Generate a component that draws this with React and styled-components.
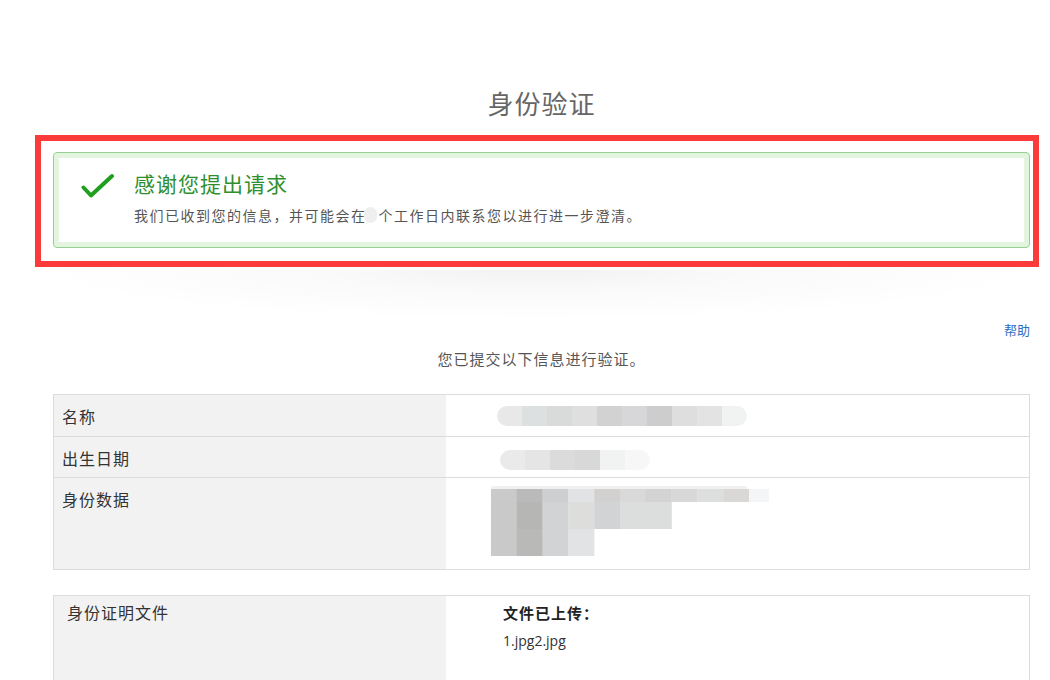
import styled, { createGlobalStyle } from "styled-components";

const GlobalStyle = createGlobalStyle`
  body {
    margin: 0;
    background: #fff;
    font-family: "Noto Sans CJK SC", "Noto Sans", sans-serif;
  }
`;

const Page = styled.div`
  width: 977px;
  margin-left: 53px;
  padding-top: 85px;
`;

const Title = styled.h1`
  margin: 0 0 14px;
  font-size: 26px;
  font-weight: 400;
  line-height: 36px;
  letter-spacing: 1px;
  color: #666;
  text-align: center;
`;

// red annotation frame around the alert
const Highlight = styled.div`
  margin: 0 -9px 0 -18px;
  border: 6px solid #fb3a3a;
  padding: 11px 3px 13px 12px;
`;

const Alert = styled.div`
  display: flex;
  align-items: flex-start;
  height: 96px;
  box-sizing: border-box;
  padding: 18px 0 0 26px;
  border: 1px solid #93cf93;
  border-radius: 4px;
  box-shadow: inset 0 0 0 5px #e3f4df;
  background: #fff;
`;

const CheckIcon = styled.svg`
  flex: none;
  width: 34px;
  height: 28px;
  margin-top: 1px;
`;

const AlertBody = styled.div`
  margin-left: 20px;
`;

const AlertTitle = styled.div`
  font-size: 21px;
  line-height: 24px;
  letter-spacing: 1px;
  color: #2f8f2f;
`;

const AlertText = styled.div`
  margin-top: 10px;
  font-size: 14px;
  line-height: 20px;
  letter-spacing: 1.5px;
  color: #555;
  display: flex;
  align-items: center;
`;

const Redacted = styled.span`
  display: inline-block;
  width: 13px;
  height: 16px;
  margin: 0 2px 0 -3px;
  border-radius: 8px;
  background: #efefef;
`;

const Shade = styled.div`
  height: 50px;
  margin: 3px 10px 0 0;
  background: radial-gradient(
    ellipse 52% 100% at 50% 0%,
    rgba(0, 0, 0, 0.05),
    rgba(0, 0, 0, 0.018) 45%,
    rgba(0, 0, 0, 0) 100%
  );
`;

const HelpRow = styled.div`
  text-align: right;
  line-height: 16px;
`;

const HelpLink = styled.a`
  font-size: 13px;
  color: #2f6fc4;
  text-decoration: none;
`;

const Intro = styled.p`
  margin: 11px 0 25px;
  font-size: 15px;
  line-height: 20px;
  letter-spacing: 1px;
  color: #555;
  text-align: center;
`;

const InfoTable = styled.div`
  border: 1px solid #dcdcdc;
  margin-bottom: ${(p) => p.$gap || 0}px;
`;

const Row = styled.div`
  display: grid;
  grid-template-columns: 392px 1fr;
  box-sizing: border-box;
  height: ${(p) => p.$h}px;
  & + & {
    border-top: 1px solid #dcdcdc;
  }
`;

const Label = styled.div`
  background: #f2f2f2;
  padding: ${(p) => p.$top || 11}px 9px 0 ${(p) => p.$left || 8}px;
  font-size: 16px;
  line-height: 20px;
  letter-spacing: 1px;
  color: #333;
`;

const Value = styled.div`
  background: #fff;
  padding: ${(p) => p.$top || 0}px 0 0 ${(p) => p.$left || 0}px;
`;

const FileHead = styled.div`
  font-size: 15px;
  font-weight: 700;
  line-height: 20px;
  letter-spacing: 1px;
  color: #222;
`;

const FileName = styled.div`
  margin-top: 8px;
  font-family: "Open Sans", "Noto Sans", sans-serif;
  font-size: 14px;
  line-height: 20px;
  color: #333;
`;

const nameCells = ["#e8e8e8", "#dde0e0", "#d9dbdb", "#dfdfdf", "#d2d2d2", "#d7d7d9", "#cdcdcd", "#dedede", "#e3e3e3", "#f1f2f2"];
const dateCells = ["#eaeaea", "#e5e5e5", "#dbdbdb", "#d8d8d8", "#f1f2f2", "#f7f7f8"];
const idRows = [
  { y: 3, h: 13, c: ["#cacaca", "#bababa", "#cdcfd1", "#e1e3e5", "#d2d1d0", "#d9d9d9", "#d3d3d3", "#d8d8d8", "#dddfdf", "#d9d8d7", "#f4f5f7"] },
  { y: 16, h: 27, c: ["#c9c9c9", "#b6b6b5", "#d1d3d5", "#dddddb", "#d1d3d5", "#dcdddd", "#dcdede"] },
  { y: 43, h: 27, c: ["#c9c9c9", "#b9b9b8", "#d1d3d5", "#e1e3e5"] },
];

const Blob = ({ cells, width, cellW }) => (
  <svg width={width} height="22" viewBox={`0 0 ${width} 22`}>
    <defs>
      <clipPath id={`clip${width}`}>
        <rect x="0" y="1" width={width} height="20" rx="10" />
      </clipPath>
    </defs>
    <g clipPath={`url(#clip${width})`}>
      {cells.map((c, i) => (
        <rect key={i} x={i * cellW} y="0" width={cellW + 0.5} height="22" fill={c} />
      ))}
    </g>
  </svg>
);

const Mosaic = () => (
  <svg width="280" height="72" viewBox="0 0 280 72">
    <rect x="2" y="0" width="256" height="4" rx="2" fill="#f0f0f0" />
    {idRows.map((r) =>
      r.c.map((c, i) => (
        <rect key={`${r.y}-${i}`} x={2 + i * 25.8} y={r.y} width="26" height={r.h} fill={c} />
      ))
    )}
  </svg>
);

const App = () => (
  <>
    <GlobalStyle />
    <Page>
      <Title>身份验证</Title>
      <Highlight>
        <Alert>
          <CheckIcon viewBox="0 0 34 28">
            <polyline
              points="3.5,15.5 11,23.5 32,4"
              fill="none"
              stroke="#1f9f1f"
              strokeWidth="4"
              strokeLinecap="round"
              strokeLinejoin="round"
            />
          </CheckIcon>
          <AlertBody>
            <AlertTitle>感谢您提出请求</AlertTitle>
            <AlertText>
              我们已收到您的信息，并可能会在<Redacted />个工作日内联系您以进行进一步澄清。
            </AlertText>
          </AlertBody>
        </Alert>
      </Highlight>
      <Shade />
      <HelpRow>
        <HelpLink href="#">帮助</HelpLink>
      </HelpRow>
      <Intro>您已提交以下信息进行验证。</Intro>

      <InfoTable $gap={25}>
        <Row $h={41}>
          <Label>名称</Label>
          <Value $top={10} $left={51}>
            <Blob cells={nameCells} width={250} cellW={25} />
          </Value>
        </Row>
        <Row $h={41}>
          <Label>出生日期</Label>
          <Value $top={12} $left={54}>
            <Blob cells={dateCells} width={150} cellW={25} />
          </Value>
        </Row>
        <Row $h={92}>
          <Label>身份数据</Label>
          <Value $top={8} $left={43}>
            <Mosaic />
          </Value>
        </Row>
      </InfoTable>

      <InfoTable>
        <Row $h={100}>
          <Label $top={6} $left={13}>身份证明文件</Label>
          <Value $top={7} $left={57}>
            <FileHead>文件已上传：</FileHead>
            <FileName>1.jpg2.jpg</FileName>
          </Value>
        </Row>
      </InfoTable>
    </Page>
  </>
);

export default App;
